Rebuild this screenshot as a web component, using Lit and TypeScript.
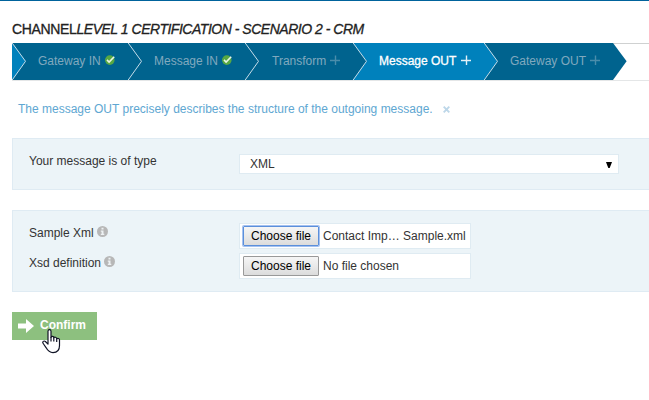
import { LitElement, html, svg, css, nothing } from 'lit';
import { customElement } from 'lit/decorators.js';
import { classMap } from 'lit/directives/class-map.js';

interface Step {
  id: string;
  label: string;
  done?: boolean;
  active?: boolean;
}

const STEPS: Step[] = [
  { id: 's1', label: 'Gateway IN', done: true },
  { id: 's2', label: 'Message IN', done: true },
  { id: 's3', label: 'Transform' },
  { id: 's4', label: 'Message OUT', active: true },
  { id: 's5', label: 'Gateway OUT' },
];

@customElement('step-bar')
export class StepBar extends LitElement {
  static styles = css`
    :host { display: block; }
    .bar { display: flex; height: 38px; box-sizing: border-box; border-bottom: 1px solid #e4e6e7; background: linear-gradient(#cfd1d1 1px, #fff 1px); }
    .step { display: flex; height: 37px; background: #00638e; color: #80a9be; font-size: 12px; line-height: 37px; white-space: nowrap; }
    .active { background: #0081bc; color: #fff; -webkit-text-stroke: 0.3px #fff; }
    .s1 { width: 116px; } .s2 { width: 117px; } .s3 { width: 108px; } .s4 { width: 131px; } .s5 { width: 129px; }
    .sep { width: 14px; height: 37px; flex: none; }
    .label { margin-left: 12px; }
    .s3 .label { margin-left: 13px; }
    .icon { width: 10px; height: 10px; margin: 12px 0 0 4px; flex: none; }
    .s4 .icon { margin-left: 5px; }
  `;

  private chevron(fill: string, line = true) {
    return html`<svg class="sep" viewBox="0 0 14 37">
      <polygon points="0,0 13.6,18.3 0,37" fill=${fill}></polygon>
      ${line ? svg`<path d="M0.2 0L13.5 18.3L0.2 37" fill="none" stroke="#c5dde9" stroke-width="1"></path>` : nothing}
    </svg>`;
  }

  private icon(s: Step) {
    return s.done
      ? html`<svg class="icon" viewBox="0 0 10 10"><circle cx="4.8" cy="5.1" r="4.8" fill="#58a843"></circle><path d="M2 4.9L4.1 7L9.2 1.7" fill="none" stroke="#e9f6e6" stroke-width="1.6"></path></svg>`
      : html`<svg class="icon" viewBox="0 0 10 10"><path d="M0 5.5H10M5.5 0.5V10" fill="none" stroke=${s.active ? '#e3f1f8' : '#4a8dab'} stroke-width="1.4"></path></svg>`;
  }

  render() {
    return html`<div class="bar">
      ${STEPS.map((s, i) => html`<div class=${classMap({ step: true, [s.id]: true, active: !!s.active })}>
        ${this.chevron(i === 0 || STEPS[i - 1].active ? '#0081bc' : '#00638e')}
        <span class="label">${s.label}</span>${this.icon(s)}
      </div>`)}
      ${this.chevron('#00638e', false)}
    </div>`;
  }
}

@customElement('file-field')
export class FileField extends LitElement {
  static properties = { file: {}, focused: { type: Boolean } };
  declare file: string;
  declare focused: boolean;

  static styles = css`
    :host { display: block; }
    .field { display: flex; align-items: center; box-sizing: border-box; width: 232px; height: 26px; padding-left: 3px; border: 1px solid #dfebf2; background: #fff; font-size: 12px; color: #333; }
    .pick { box-sizing: border-box; width: 76px; height: 20px; margin: 0; padding: 0; border: 1px solid #999; border-radius: 1px; background: linear-gradient(#f6f6f6, #dcdcdc); font: 12px "Liberation Sans", Arial, sans-serif; color: #000; }
    .focused { border-color: #5b8fdb; box-shadow: 0 0 0 1px #a5c2f0; }
    .name { margin-left: 4px; white-space: nowrap; }
  `;

  render() {
    return html`<div class="field">
      <button class=${classMap({ pick: true, focused: this.focused })}>Choose file</button>
      <span class="name">${this.file}</span>
    </div>`;
  }
}

@customElement('app-root')
export class AppRoot extends LitElement {
  static styles = css`
    :host { display: block; box-sizing: border-box; height: 400px; overflow: hidden; border-top: 1px solid #00639c; background: #fff; padding-left: 12px; font: 12px "Liberation Sans", Arial, sans-serif; color: #333; }
    .title { height: 42px; box-sizing: border-box; padding-top: 20px; line-height: 16px; font-size: 14px; white-space: nowrap; color: #222; -webkit-text-stroke: 0.3px #222; }
    .channel { letter-spacing: -0.35px; }
    .name { letter-spacing: -0.48px; }
    .hint { display: flex; height: 57px; box-sizing: border-box; padding: 20px 0 0 6px; line-height: 16px; color: #60a7d2; white-space: nowrap; }
    .close { width: 7px; height: 7px; margin: 5px 0 0 10px; }
    .panel { box-sizing: border-box; border: 1px solid #dfebf3; border-right: 0; background: #ecf4f8; padding-left: 16px; }
    .type { height: 52px; margin-bottom: 20px; padding-top: 14px; }
    .files { height: 82px; margin-bottom: 20px; padding-top: 12px; }
    .row { display: flex; height: 30px; }
    .label { display: flex; width: 210px; flex: none; line-height: 20px; }
    .type .label { line-height: 16px; }
    .select { display: flex; box-sizing: border-box; width: 380px; height: 20px; margin-top: 1px; border: 1px solid #dfebf2; background: #fff; padding: 0 6px 0 10px; line-height: 18px; justify-content: space-between; }
    .caret { width: 6px; height: 6px; margin-top: 7px; }
    .info { width: 11px; height: 11px; margin: 3px 0 0 3px; }
    .confirm { position: relative; display: flex; width: 85px; height: 28px; border: 0; padding: 0; background: #8dc07f; color: #fff; font: bold 12px/27px "Liberation Sans", Arial, sans-serif; }
    .go { width: 16px; height: 14px; margin: 7px 6px 0 6px; }
    .cursor { position: absolute; left: 30px; top: 17px; width: 19px; height: 25px; }
  `;

  private info() {
    return html`<svg class="info" viewBox="0 0 11 11"><circle cx="5.5" cy="5.5" r="5.5" fill="#b7b7b7"></circle><path d="M4.5 1.7h2v1.8h-2zM3.8 4.5h2.7v3.3h.8v1.2H3.8V7.8h.8V5.7h-.8z" fill="#edf1f3"></path></svg>`;
  }

  render() {
    return html`
      <div class="title"><span class="channel">CHANNEL</span><i class="name">LEVEL 1 CERTIFICATION - SCENARIO 2 - CRM</i></div>
      <step-bar></step-bar>
      <div class="hint"><span>The message OUT precisely describes the structure of the outgoing message.</span>
        <svg class="close" viewBox="0 0 7 7"><path d="M.7.7L6.3 6.3M6.3.7L.7 6.3" stroke="#bdd7e9" stroke-width="1.9"></path></svg>
      </div>
      <div class="panel type">
        <div class="row"><span class="label">Your message is of type</span>
          <div class="select"><span>XML</span><svg class="caret" viewBox="0 0 6 6"><path d="M0 0H6L3.7 6H2.3Z" fill="#000"></path></svg></div>
        </div>
      </div>
      <div class="panel files">
        <div class="row"><span class="label">Sample Xml${this.info()}</span><file-field focused file="Contact Imp… Sample.xml"></file-field></div>
        <div class="row"><span class="label">Xsd definition${this.info()}</span><file-field file="No file chosen"></file-field></div>
      </div>
      <button class="confirm">
        <svg class="go" viewBox="0 0 16 14"><path d="M0 4.5H8V0L16 7L8 14V9.5H0Z" fill="#fff"></path></svg><span>Confirm</span>
        <svg class="cursor" viewBox="0 0 19 25"><path d="M6 2.2C6 .2 9 .2 9 2.2V8.3C9.5 7 11.7 7.2 11.8 8.8C12.5 7.7 14.6 8.1 14.7 9.7C15.7 8.9 17.5 9.4 17.5 11V16.5C17.5 21.2 15 23.6 11 23.6C7.6 23.6 5.9 22 4.2 18.8L1.2 14.5C-.1 12.7 2 11.3 3.4 12.5L6 15.1Z" fill="#fff" stroke="#111426" stroke-width="1.2" stroke-linejoin="round"></path><path d="M9 8V12.5M11.8 8.8V12.5M14.7 9.7V13" stroke="#111426" stroke-width="1.2"></path></svg>
      </button>
    `;
  }
}
